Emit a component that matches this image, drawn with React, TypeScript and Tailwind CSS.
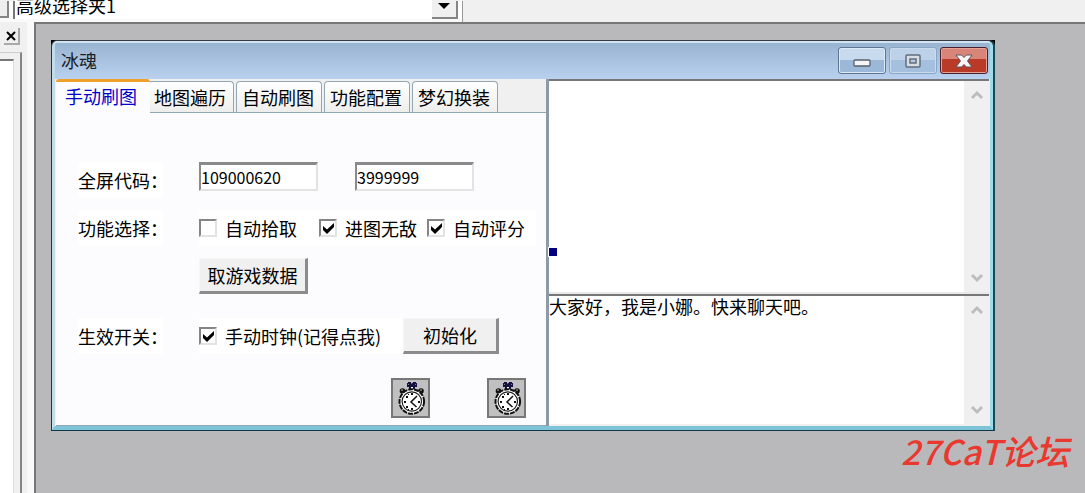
import { useState } from "react";

interface CheckOptionProps {
    label: string;
    checked: boolean;
    onChange: (checked: boolean) => void;
    className?: string;
}

interface CodeInputProps {
    label: string;
    value: string;
    onChange: (value: string) => void;
}

const tabs = ["手动刷图", "地图遍历", "自动刷图", "功能配置", "梦幻换装"];

function CheckOption({ label, checked, onChange, className = "" }: CheckOptionProps) {
    return (
        <label className={"flex h-9 items-center gap-2 whitespace-nowrap bg-white " + className}>
            <span className="grid">
                <input
                    type="checkbox"
                    checked={checked}
                    onChange={(e) => onChange(e.target.checked)}
                    className="peer col-start-1 row-start-1 size-[18px] appearance-none border-2 border-t-[#858585] border-l-[#858585] border-r-[#e3e3e3] border-b-[#e3e3e3] bg-white"
                />
                <svg
                    viewBox="0 0 18 18"
                    className="pointer-events-none invisible col-start-1 row-start-1 size-[18px] peer-checked:visible"
                >
                    <path d="M4 7v4l4 4 7-7V4l-7 6.500z" fill="#000" />
                </svg>
            </span>
            {label}
        </label>
    );
}

function CodeInput({ label, value, onChange }: CodeInputProps) {
    return (
        <input
            aria-label={label}
            value={value}
            onChange={(e) => onChange(e.target.value)}
            className="h-[29px] w-[119px] rounded-none border-2 border-t-[3px] border-t-[#8a8a8a] border-l-[#8a8a8a] border-r-[#e3e3e3] border-b-[#e3e3e3] bg-white text-[16px] leading-6 outline-none"
        />
    );
}

function FormLabel({ text }: { text: string }) {
    return (
        <span className="mr-9 flex h-9 w-[85px] shrink-0 items-center whitespace-nowrap bg-white">{text}</span>
    );
}

function PushButton({ text, className = "" }: { text: string; className?: string }) {
    return (
        <button
            className={
                "h-9 whitespace-nowrap border-t border-l border-r-[3px] border-b-[3px] border-t-[#f6f6f6] border-l-[#f6f6f6] border-r-[#8c8c8c] border-b-[#8c8c8c] bg-[#f0f0f0] " +
                className
            }
        >
            {text}
        </button>
    );
}

function TimerIcon() {
    return (
        <svg viewBox="0 0 39 40" className="h-10 w-[39px]">
            <rect x="1" y="1" width="37" height="38" fill="#c0c0c0" stroke="#777" strokeWidth="2" />
            <path d="M16 5h10v4H16zM17 4h3v1h-3zM22 4h3v1h-3zM18 9h2v3h-2zM22 9h2v3h-2z" fill="#15123f" />
            <path d="M20 9h2v3h-2z" fill="#fff" />
            <path d="M17 6h1v1h-1zM20 5h1v1h-1zM24 6h1v1h-1z" fill="#777" />
            <circle cx="11.500" cy="13" r="2.800" fill="#111" />
            <circle cx="30" cy="13" r="2.800" fill="#111" />
            <path d="M10 12h2M29 12h2" stroke="#bbb" />
            <circle cx="20.800" cy="23.500" r="12.300" fill="#fff" stroke="#111" strokeWidth="2" strokeDasharray="5 1" />
            <circle cx="20.800" cy="23.500" r="9.700" fill="#fff" stroke="#222" strokeWidth="1.200" />
            <path
                d="M20 15h2v2h-2zM20 30h2v2h-2zM13 23h2v2h-2zM27 23h2v2h-2zM15 18h2v2h-2zM15 28h2v2h-2zM17 31h1v1h-1zM17 16h1v1h-1z"
                fill="#111"
            />
            <path d="M26 18l-6 6 5.500 5" fill="none" stroke="#111" strokeWidth="1.500" />
        </svg>
    );
}

function ScrollColumn() {
    return (
        <div className="flex w-[25px] shrink-0 flex-col items-center justify-between bg-[#f0f0f0] py-2">
            <svg viewBox="0 0 14 12" className="h-3 w-[14px]">
                <path d="M2 9l5-5 5 5" fill="none" stroke="#bdbdbd" strokeWidth="3" />
            </svg>
            <svg viewBox="0 0 14 12" className="h-3 w-[14px]">
                <path d="M2 3l5 5 5-5" fill="none" stroke="#bdbdbd" strokeWidth="3" />
            </svg>
        </div>
    );
}

function TitleBar() {
    return (
        <div className="flex h-[38px] items-start justify-between border-t-2 border-[#d3e3f2] bg-linear-to-b from-[#99b4d1] to-[#b9d1ee] pr-[2px] pl-[6px]">
            <h1 className="mt-1 text-[18px] leading-[26px] text-[#1a1f26]">冰魂</h1>
            <div className="mt-1 flex gap-[3px]">
                <button
                    aria-label="最小化"
                    className="flex h-[27px] w-12 items-center justify-center rounded-[3px] border border-[#5e7691] bg-linear-to-b from-[#c8daed] from-50% to-[#9bb8d8] to-50% inset-ring inset-ring-[#dce9f6]"
                >
                    <svg viewBox="0 0 18 8" className="mt-1 h-2 w-[18px]">
                        <rect x="1" y="1" width="16" height="6" rx="1" fill="#f5f5f5" stroke="#566070" strokeWidth="1.300" />
                    </svg>
                </button>
                <button
                    aria-label="最大化"
                    className="flex h-[27px] w-12 items-center justify-center rounded-[3px] border border-[#8aa6c6] bg-linear-to-b from-[#bdd2e9] from-50% to-[#a5c0df] to-50% inset-ring inset-ring-[#c9dbee]"
                >
                    <svg viewBox="0 0 18 16" className="h-4 w-[18px]">
                        <rect x="2" y="2" width="14" height="12" rx="1" fill="#d7dde5" stroke="#626d7d" strokeWidth="1.500" />
                        <rect x="6" y="6" width="6" height="4" fill="#b7c9dd" stroke="#626d7d" strokeWidth="1.500" />
                    </svg>
                </button>
                <button
                    aria-label="关闭"
                    className="flex h-[27px] w-12 items-center justify-center rounded-[3px] border border-[#49202a] bg-linear-to-b from-[#d98478] from-45% to-[#b93a26] to-45% inset-ring inset-ring-[#e5a297]"
                >
                    <svg viewBox="0 0 18 14" className="h-[14px] w-[18px]">
                        <path
                            d="M1 1h5.500L9 3.500 11.500 1H17l-4.500 6 4.500 6h-5.500L9 10.500 6.500 13H1l4.500-6z"
                            fill="#f6f6f6"
                            stroke="#5d5560"
                            strokeWidth="1"
                        />
                    </svg>
                </button>
            </div>
        </div>
    );
}

export default function App() {
    const [activeTab, setActiveTab] = useState(0);
    const [screenCode, setScreenCode] = useState("109000620");
    const [maxCode, setMaxCode] = useState("3999999");
    const [autoPick, setAutoPick] = useState(false);
    const [invincible, setInvincible] = useState(true);
    const [autoScore, setAutoScore] = useState(true);
    const [manualClock, setManualClock] = useState(true);
    const [log, setLog] = useState("");
    const [chat, setChat] = useState("大家好，我是小娜。快来聊天吧。");

    return (
        <div className="relative flex min-h-screen flex-col overflow-hidden bg-[#f0f0f0] font-['Noto_Sans_CJK_SC',sans-serif] text-[18px] text-black">
            {/* Barra superior */}
            <header className="flex h-[22px] items-end overflow-hidden">
                <div className="flex h-[21px] w-[463px] shrink-0 items-start border-r border-[#999] bg-[#fafafa]">
                    <div className="mr-1 h-[17px] w-[9px] border-r-2 border-b-2 border-[#858585] bg-[#eee]" />
                    <div className="flex h-[18px] flex-1 items-end border-l-2 border-[#777] bg-white">
                        <select
                            aria-label="选择夹"
                            className="h-[28px] flex-1 appearance-none bg-white pl-px text-[18px] leading-7 outline-none"
                        >
                            <option>高级选择夹1</option>
                        </select>
                        <div className="flex h-[18px] w-[26px] items-start justify-center border-r-2 border-b-2 border-[#858585] bg-[#f0f0f0]">
                            <svg viewBox="0 0 12 10" className="h-[10px] w-3">
                                <path d="M0 2h12L6 8z" fill="#000" />
                            </svg>
                        </div>
                        <div className="w-1" />
                    </div>
                </div>
            </header>

            <main className="flex flex-1">
                {/* Panel lateral */}
                <aside className="flex w-[34px] shrink-0 flex-col border-r-[7px] border-[#fafafa] pt-[6px]">
                    <button
                        aria-label="关闭面板"
                        className="ml-1 flex h-[17px] w-4 items-center justify-center border-r-2 border-b-2 border-[#aaa]"
                    >
                        <svg viewBox="0 0 10 10" className="size-[10px]">
                            <path d="M1 1l8 8M9 1L1 9" stroke="#000" strokeWidth="2" />
                        </svg>
                    </button>
                    <div className="mt-[7px] mr-[5px] flex flex-1 border-t border-r-2 border-t-[#ccc] border-r-[#858585] pt-[6px]">
                        <div className="mr-[6px] flex-1 border-t-2 border-r border-t-[#777] border-r-[#ddd] bg-white" />
                    </div>
                </aside>

                <section className="flex-1 border-t-2 border-l-2 border-[#777] bg-[#b9b8ba] pt-4 pr-[90px] pb-[62px] pl-[15px]">
                    <div className="bg-black">
                        <div className="rounded-t-[6px] border border-r-2 border-t-[#333c45] border-r-[#174b5c] border-b-[#123946] border-l-[#26313b]">
                            <div className="overflow-hidden rounded-t-[5px] border-x-[3px] border-b-[4px] border-r-[#9fdcea] border-b-[#7fc3d8] border-l-[#c3dcec] bg-white">
                                <TitleBar />
                                <div className="flex h-[347px] bg-[#f0f0f0] pr-px">
                                    <div className="flex w-[494px] shrink-0 flex-col border-r-[3px] border-[#8b9aa4] pl-px">
                                        <div role="tablist" className="flex h-[34px] items-end border-b border-[#91a7b4] bg-[#f0f0f0]">
                                            {tabs.map((tab, index) => (
                                                <button
                                                    key={tab}
                                                    role="tab"
                                                    aria-selected={index === activeTab}
                                                    onClick={() => setActiveTab(index)}
                                                    className={
                                                        "whitespace-nowrap leading-6 " +
                                                        (index === activeTab
                                                            ? "z-10 -mr-[2px] -mb-px h-[34px] w-[94px] rounded-t-[3px] border-t-[3px] border-[#efa12e] bg-[#fcfcff] pr-1 pb-[3px] text-[#0000c8]"
                                                            : "mr-[2px] h-[31px] w-[86px] rounded-t-[4px] border border-b-0 border-[#91a7b4] bg-linear-to-b from-white to-[#eeeeec] pr-[2px]")
                                                    }
                                                >
                                                    {tab}
                                                </button>
                                            ))}
                                        </div>
                                        <div className="flex flex-1 flex-col border-b border-[#91a7b4] bg-[#fcfcff] pt-[49px] pl-[22px]">
                                            <div className="mb-3 flex">
                                                <FormLabel text="全屏代码：" />
                                                <div className="flex items-start gap-[37px]">
                                                    <CodeInput label="全屏代码" value={screenCode} onChange={setScreenCode} />
                                                    <CodeInput label="全屏代码上限" value={maxCode} onChange={setMaxCode} />
                                                </div>
                                            </div>
                                            <div className="mb-3 flex">
                                                <FormLabel text="功能选择：" />
                                                <CheckOption label="自动拾取" checked={autoPick} onChange={setAutoPick} className="w-[120px]" />
                                                <CheckOption label="进图无敌" checked={invincible} onChange={setInvincible} className="w-[108px]" />
                                                <CheckOption label="自动评分" checked={autoScore} onChange={setAutoScore} className="w-[109px]" />
                                            </div>
                                            <div className="mb-6 ml-[121px] flex">
                                                <PushButton text="取游戏数据" className="w-[109px]" />
                                            </div>
                                            <div className="mb-6 flex">
                                                <FormLabel text="生效开关：" />
                                                <CheckOption label="手动时钟(记得点我)" checked={manualClock} onChange={setManualClock} className="w-[204px]" />
                                                <PushButton text="初始化" className="w-24" />
                                            </div>
                                            <div className="ml-[313px] flex gap-[57px]">
                                                <TimerIcon />
                                                <TimerIcon />
                                            </div>
                                        </div>
                                    </div>

                                    {/* Registro y chat */}
                                    <div className="relative flex min-w-0 flex-1 flex-col">
                                        <div className="flex h-[215px] border-t-2 border-b-2 border-t-[#777] border-b-[#e9e9e9] bg-white">
                                            <textarea
                                                aria-label="日志"
                                                value={log}
                                                onChange={(e) => setLog(e.target.value)}
                                                className="min-w-0 flex-1 resize-none outline-none"
                                            />
                                            <ScrollColumn />
                                        </div>
                                        <div className="flex flex-1 border-t-2 border-b-2 border-t-[#777] border-b-[#f0f0f0] bg-white">
                                            <textarea
                                                aria-label="聊天"
                                                value={chat}
                                                onChange={(e) => setChat(e.target.value)}
                                                className="min-w-0 flex-1 resize-none leading-5 outline-none"
                                            />
                                            <ScrollColumn />
                                        </div>
                                        <div className="absolute top-[168px] -left-px size-[10px] border border-white bg-[#000080]" />
                                    </div>
                                </div>
                            </div>
                        </div>
                    </div>
                </section>
            </main>

            <div className="absolute right-4 bottom-5 text-[34px] leading-[44px] font-medium text-[#e8382f] italic">
                27CaT论坛
            </div>
        </div>
    );
}
